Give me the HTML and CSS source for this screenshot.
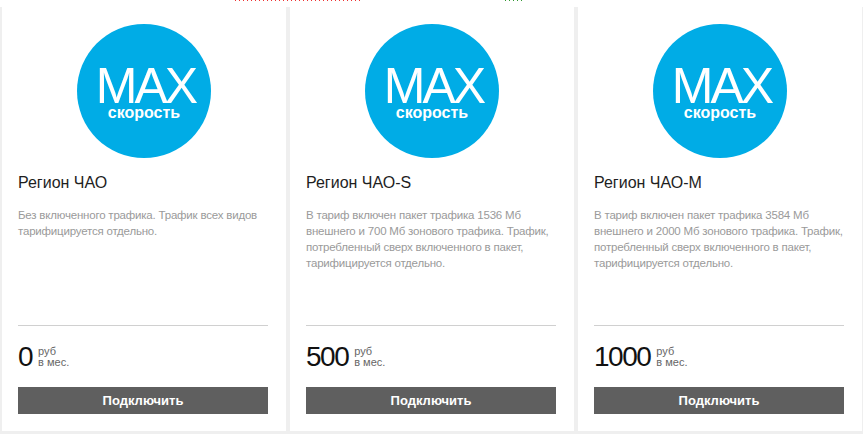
FILE: index.html
```html
<!DOCTYPE html>
<html lang="ru">
<head>
<meta charset="utf-8">
<title>Тарифы</title>
<link rel="stylesheet" href="styles.css">
</head>
<body>
<div class="marks">
  <span class="mark mark-red"></span>
  <span class="mark mark-green"></span>
</div>
<div class="row">
  <div class="card">
    <div class="badge"><div class="badge-max">MAX</div><div class="badge-sub">скорость</div></div>
    <div class="title">Регион ЧАО</div>
    <div class="desc">Без включенного трафика. Трафик всех видов<br>тарифицируется отдельно.</div>
    <div class="foot">
      <div class="price"><span class="num">0</span><span class="unit">руб<br>в мес.</span></div>
      <button class="btn">Подключить</button>
    </div>
  </div>
  <div class="card">
    <div class="badge"><div class="badge-max">MAX</div><div class="badge-sub">скорость</div></div>
    <div class="title">Регион ЧАО-S</div>
    <div class="desc">В тариф включен пакет трафика 1536 Мб<br>внешнего и 700 Мб зонового трафика. Трафик,<br>потребленный сверх включенного в пакет,<br>тарифицируется отдельно.</div>
    <div class="foot">
      <div class="price"><span class="num">500</span><span class="unit">руб<br>в мес.</span></div>
      <button class="btn">Подключить</button>
    </div>
  </div>
  <div class="card">
    <div class="badge"><div class="badge-max">MAX</div><div class="badge-sub">скорость</div></div>
    <div class="title">Регион ЧАО-M</div>
    <div class="desc">В тариф включен пакет трафика 3584 Мб<br>внешнего и 2000 Мб зонового трафика. Трафик,<br>потребленный сверх включенного в пакет,<br>тарифицируется отдельно.</div>
    <div class="foot">
      <div class="price"><span class="num">1000</span><span class="unit">руб<br>в мес.</span></div>
      <button class="btn">Подключить</button>
    </div>
  </div>
</div>
</body>
</html>
```
FILE: styles.css
```css
* { box-sizing: border-box; }
html, body { margin: 0; padding: 0; }
body {
  background: #fff;
  font-family: "Liberation Sans", Arial, sans-serif;
  width: 863px;
  height: 434px;
  overflow: hidden;
  position: relative;
}
.marks { position: absolute; top: 0; left: 0; width: 863px; height: 1px; }
.mark { position: absolute; top: 0; height: 1px; }
.mark-red {
  left: 235px; width: 125px;
  background: repeating-linear-gradient(90deg, #e33 0 1px, transparent 1px 4px);
}
.mark-green {
  left: 505px; width: 17px;
  background: repeating-linear-gradient(90deg, #393 0 1px, transparent 1px 4px);
}
.row {
  margin-top: 7px;
  display: flex;
  gap: 4px;
  padding: 0 1px 3px 2px;
  background: #efefef;
  height: 427px;
}
.card {
  width: 284px;
  flex: none;
  background: #fff;
  display: flex;
  flex-direction: column;
  padding: 17px 18px 17px 16px;
}
.badge {
  width: 134px;
  height: 134px;
  border-radius: 50%;
  background: #00ace6;
  color: #fff;
  align-self: center;
  text-align: center;
  padding-top: 42px;
  margin-left: 2px;
}
.badge-max {
  font-size: 50px;
  line-height: 40px;
  letter-spacing: -3px;
  margin-right: -3px;
}
.badge-sub {
  font-size: 16px;
  font-weight: bold;
  line-height: 16px;
  margin-top: -1px;
}
.title {
  margin-top: 16px;
  font-size: 16px;
  line-height: 18px;
  color: #1e1e1e;
}
.desc {
  margin-top: 15px;
  font-size: 11.5px;
  letter-spacing: -0.2px;
  line-height: 16px;
  color: #9a9a9a;
  white-space: nowrap;
  flex: 1;
}
.foot {
  border-top: 1px solid #d0d0d0;
  padding-top: 17px;
}
.price {
  display: flex;
  align-items: flex-start;
  gap: 6px;
  height: 28px;
}
.num {
  font-size: 28px;
  line-height: 28px;
  color: #111;
  letter-spacing: -1.5px;
}
.unit {
  font-size: 11px;
  line-height: 11px;
  color: #666;
  margin-top: 3px;
}
.btn {
  display: block;
  width: 100%;
  height: 27px;
  margin-top: 16px;
  border: 0;
  background: #5f5f5f;
  color: #fff;
  font-family: "Liberation Sans", Arial, sans-serif;
  font-size: 13px;
  font-weight: bold;
  padding: 0;
}
```
